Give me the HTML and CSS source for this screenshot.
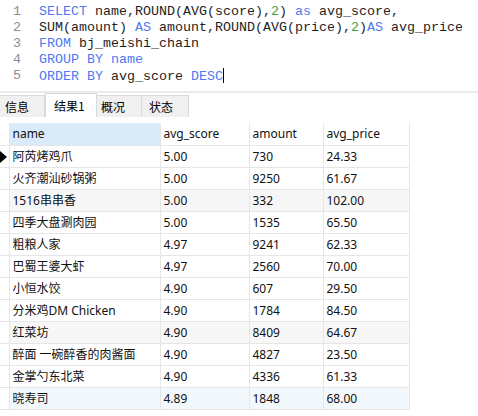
FILE: index.html
```html
<!DOCTYPE html>
<html lang="zh-CN">
<head>
<meta charset="utf-8">
<title>Query</title>
<link rel="stylesheet" href="styles.css">
</head>
<body>
<div class="editor">
  <div class="line"><span class="ln">1</span><span class="code"><span class="kw">SELECT</span> name,ROUND(AVG(score),<span class="num">2</span>) <span class="kw">as</span> avg_score,</span></div>
  <div class="line"><span class="ln">2</span><span class="code">SUM(amount) <span class="kw">AS</span> amount,ROUND(AVG(price),<span class="num">2</span>)<span class="kw">AS</span> avg_price</span></div>
  <div class="line"><span class="ln">3</span><span class="code"><span class="kw">FROM</span> bj_meishi_chain</span></div>
  <div class="line"><span class="ln">4</span><span class="code"><span class="kw">GROUP BY name</span></span></div>
  <div class="line"><span class="ln">5</span><span class="code"><span class="kw">ORDER BY</span> avg_score <span class="kw">DESC</span><span class="caret"></span></span></div>
</div>
<div class="sep"></div>
<div class="tabs">
  <div class="tab t1">信息</div>
  <div class="tab t2 active">结果1</div>
  <div class="tab t3">概况</div>
  <div class="tab t4">状态</div>
</div>
<div class="result">
  <table class="grid">
    <colgroup>
      <col class="c0"><col class="c1"><col class="c2"><col class="c3"><col class="c4">
    </colgroup>
    <thead>
      <tr><th class="rh"></th><th class="sel">name</th><th>avg_score</th><th>amount</th><th>avg_price</th></tr>
    </thead>
    <tbody>
      <tr><td class="rh"><span class="mark"></span></td><td>阿芮烤鸡爪</td><td>5.00</td><td>730</td><td>24.33</td></tr>
      <tr><td class="rh"></td><td>火齐潮汕砂锅粥</td><td>5.00</td><td>9250</td><td>61.67</td></tr>
      <tr class="alt"><td class="rh"></td><td>1516串串香</td><td>5.00</td><td>332</td><td>102.00</td></tr>
      <tr><td class="rh"></td><td>四季大盘涮肉园</td><td>5.00</td><td>1535</td><td>65.50</td></tr>
      <tr><td class="rh"></td><td>粗粮人家</td><td>4.97</td><td>9241</td><td>62.33</td></tr>
      <tr><td class="rh"></td><td>巴蜀王婆大虾</td><td>4.97</td><td>2560</td><td>70.00</td></tr>
      <tr><td class="rh"></td><td>小恒水饺</td><td>4.90</td><td>607</td><td>29.50</td></tr>
      <tr><td class="rh"></td><td>分米鸡DM Chicken</td><td>4.90</td><td>1784</td><td>84.50</td></tr>
      <tr class="alt"><td class="rh"></td><td>红菜坊</td><td>4.90</td><td>8409</td><td>64.67</td></tr>
      <tr><td class="rh"></td><td>醉面 一碗醉香的肉酱面</td><td>4.90</td><td>4827</td><td>23.50</td></tr>
      <tr><td class="rh"></td><td>金掌勺东北菜</td><td>4.90</td><td>4336</td><td>61.33</td></tr>
      <tr class="hover"><td class="rh"></td><td>晓寿司</td><td>4.89</td><td>1848</td><td>68.00</td></tr>
    </tbody>
  </table>
</div>
</body>
</html>
```

FILE: styles.css
```css
* { box-sizing: border-box; }
html, body { margin: 0; padding: 0; background: #ffffff; }
body { width: 478px; height: 416px; overflow: hidden; }

.editor {
  height: 91px;
  padding-top: 4px;
  font-family: "Liberation Mono", "Courier New", monospace;
  font-size: 13.33px;
  color: #1e1e1e;
  background: #ffffff;
}
.line { display: flex; height: 16px; line-height: 16px; white-space: pre; }
.ln { width: 21px; text-align: right; color: #8c8c8c; }
.code { margin-left: 18px; position: relative; }
.kw { color: #4f79f2; }
.num { color: #3e9b3e; }
.caret {
  display: inline-block;
  width: 1px;
  height: 15px;
  background: #000;
  vertical-align: -3px;
}

.sep { height: 2px; background: #ebebeb; }

.tabs {
  display: flex;
  align-items: flex-end;
  height: 24px;
  font-family: "Noto Sans CJK SC", "Noto Sans", sans-serif;
  font-size: 12px;
  color: #000;
}
.tab {
  height: 22px;
  display: flex;
  align-items: center;
  background: #f0f0f0;
  border: 1px solid #d9d9d9;
  border-bottom: none;
  border-left: none;
  padding-left: 6px;
}
.t1 { width: 45px; padding-left: 5px; }
.t2 { width: 52px; padding-left: 8px; }
.t3 { width: 45px; padding-left: 4px; }
.t4 { width: 47px; padding-left: 7px; }
.tab.active {
  height: 24px;
  background: #ffffff;
  border-left: 1px solid #d9d9d9;
  padding-bottom: 1px;
}

.result { padding-top: 6px; }
.grid {
  border-collapse: collapse;
  table-layout: fixed;
  width: 409px;
  font-family: "Noto Sans", "Noto Sans CJK SC", sans-serif;
  font-size: 12px;
  color: #111;
}
.c0 { width: 9px; }
.c1 { width: 151px; }
.c2 { width: 89px; }
.c3 { width: 74px; }
.c4 { width: 86px; }
.grid th, .grid td {
  height: 22px;
  padding: 0 0 0 3px;
  border: 1px solid #e6e6e6;
  text-align: left;
  font-weight: normal;
  white-space: nowrap;
  overflow: hidden;
  font-family: "Noto Sans", "Noto Sans CJK SC", sans-serif;
}
.grid thead th { border-top: none; }
.grid th.sel { background: #d9eaf8; }
.grid .rh { padding: 0; border-left: none; background: #ffffff; position: relative; }
.grid tr.alt td { background: #f7f7f7; }
.grid tr.hover td { background: #f3f8fd; }
.grid tr td.rh { background: #ffffff; }
.mark {
  position: absolute;
  left: 0;
  top: 5px;
  width: 0;
  height: 0;
  border-top: 6px solid transparent;
  border-bottom: 6px solid transparent;
  border-left: 7px solid #000;
}
```
